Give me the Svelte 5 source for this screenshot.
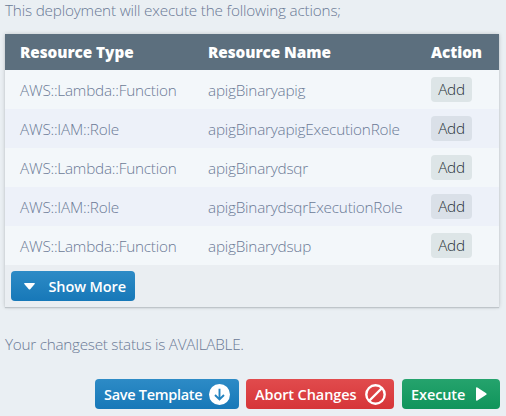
<script>
  const rows = [
    ['AWS::Lambda::Function', 'apigBinaryapig'],
    ['AWS::IAM::Role', 'apigBinaryapigExecutionRole'],
    ['AWS::Lambda::Function', 'apigBinarydsqr'],
    ['AWS::IAM::Role', 'apigBinarydsqrExecutionRole'],
    ['AWS::Lambda::Function', 'apigBinarydsup']
  ];
</script>

<main>
  <p class="intro"><span>This deployment will execute the following actions;</span></p>
  <section class="card">
    <div class="row head">
      <span>Resource Type</span><span>Resource Name</span><span>Action</span>
    </div>
    {#each rows as [type, name]}
      <div class="row">
        <span>{type}</span><span>{name}</span><b class="tag">Add</b>
      </div>
    {/each}
    <div class="foot">
      <button class="blue more">
        <svg width="11" height="7" viewBox="0 0 11 7"><path d="M.7 0h9.6q.9.1.4.9L6.2 6.3q-.7.6-1.4 0L.3.9Q-.2.1.7 0z" fill="#fff" /></svg>
        <span>Show More</span>
      </button>
    </div>
  </section>
  <p class="status"><span>Your changeset status is AVAILABLE.</span></p>
  <div class="actions">
    <button class="blue save">
      <span>Save Template</span>
      <svg width="21" height="21" viewBox="0 0 21 21"><circle cx="10.5" cy="10.5" r="10.5" fill="#fff" /><path d="M10.5 4.7v10.6M6 11l4.5 4.5L15 11" fill="none" stroke="#2383c0" stroke-width="1.9" /></svg>
    </button>
    <button class="red">
      <span>Abort Changes</span>
      <svg width="21" height="21" viewBox="0 0 21 21" fill="none" stroke="#fff" stroke-width="2.4"><circle cx="10.5" cy="10.5" r="9.2" /><path d="M4 17 17 4" /></svg>
    </button>
    <button class="green">
      <span>Execute</span>
      <svg width="11" height="14" viewBox="0 0 11 14"><path d="M0 1.3Q.1-.2 1.4.5l8.8 5.7q.9.8 0 1.6l-8.8 5.7Q.1 14.2 0 12.7z" fill="#fff" /></svg>
    </button>
  </div>
</main>

<style>
  :global(body) { margin: 0; background: #eaeff3; }
  main {
    box-sizing: border-box;
    width: 506px;
    height: 416px;
    padding: 0 7px 0 5px;
    overflow: hidden;
    background: #eaeff3;
    color: #6b7a96;
    font: 300 15.3px/20px "Open Sans", "Noto Sans", sans-serif;
    white-space: nowrap;
  }
  p { margin: 0; }
  .intro { height: 34px; letter-spacing: -0.19px; }
  .card {
    height: 273px;
    background: #eaeef2;
    box-shadow: 0 1px 1px #bfc5ca, 0 0 4px rgba(0, 0, 0, 0.18);
  }
  .row {
    display: grid;
    grid-template-columns: 188px 223px 1fr;
    align-items: center;
    height: 39px;
    padding-left: 15px;
    background: #f3f7fa;
    letter-spacing: -0.22px;
  }
  .row:nth-child(odd) { background: #edf1f9; }
  .row.head {
    height: 36px;
    background: #5c6f7e;
    color: #fff;
    font-weight: 800;
    letter-spacing: -0.05px;
  }
  .tag {
    width: 41px;
    height: 25px;
    border-radius: 4px;
    color: #29343a;
    font-weight: 300;
    line-height: 24px;
    text-align: center;
  }
  .row:nth-child(odd) .tag { background: #dae0e8; }
  .row:nth-child(even) .tag { background: #dde5e7; }
  .foot { padding: 6px; height: 31px; }
  button {
    box-sizing: border-box;
    display: flex;
    align-items: center;
    justify-content: space-between;
    height: 30px;
    margin: 0;
    padding: 0 8px 0 9px;
    border: 0;
    border-radius: 4px;
    color: #fff;
    font: 600 14.5px/31px "Open Sans", "Noto Sans", sans-serif;
    letter-spacing: -0.1px;
  }
  svg { display: block; flex: none; }
  .blue { background: linear-gradient(#2d8bc6, #1778b8); }
  .red { width: 148px; background: linear-gradient(#e14b4d, #d63538); }
  .green { width: 98px; background: linear-gradient(#25a36d, #10945b); padding-right: 13px; }
  .more { width: 124px; padding: 0 9px 0 13px; }
  .save { width: 144px; letter-spacing: -0.3px; padding-right: 9px; }
  .status { height: 45px; padding-top: 27px; letter-spacing: -0.27px; }
  .actions { display: flex; padding-left: 90px; }
  .red { margin-left: 7px; }
  .green { margin-left: 8px; }
  .actions button { flex: none; }
</style>
